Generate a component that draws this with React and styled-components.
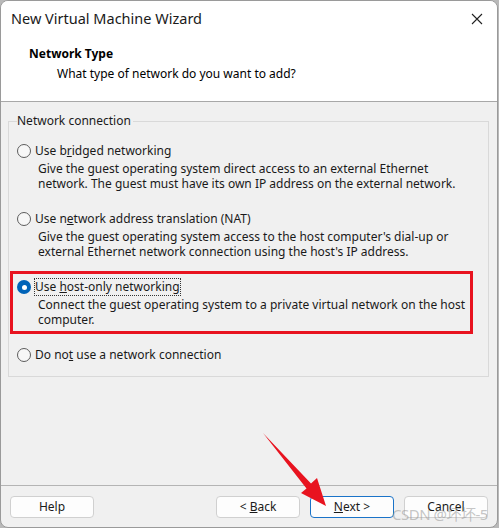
import React from "react";
import styled, { createGlobalStyle, css } from "styled-components";

const Global = createGlobalStyle`
  html, body { margin: 0; padding: 0; }
  body {
    background: #b9b9b9;
    font-family: "Noto Sans", "Liberation Sans", sans-serif;
    font-size: 12px;
    color: #000;
    width: 499px;
    height: 528px;
    overflow: hidden;
  }
`;

const Stage = styled.div`
  position: relative;
  width: 499px;
  height: 528px;
`;

const Window = styled.div`
  width: 498px;
  height: 528px;
  box-sizing: border-box;
  border: 1px solid #9a9a9a;
  border-radius: 8px;
  overflow: hidden;
  background: #f0f0f0;
  display: flex;
  flex-direction: column;
`;

const TitleBar = styled.div`
  height: 36px;
  background: #fff;
  display: flex;
  align-items: center;
  justify-content: space-between;
  padding: 0 13px 0 10px;
  flex-shrink: 0;
`;

const Title = styled.span`
  font-size: 14.5px;
  color: #1a1a1a;
  margin-top: -2px;
`;

const CloseBtn = styled.span`
  display: flex;
  width: 14px;
  height: 14px;
  margin-top: -1px;
`;

const Header = styled.div`
  background: #fff;
  height: 65px;
  border-bottom: 1px solid #a8a8a8;
  padding: 7px 0 0 28px;
  box-sizing: border-box;
  flex-shrink: 0;
`;

const HeaderTitle = styled.div`
  font-weight: 700;
  font-size: 12px;
  line-height: 20px;
`;

const HeaderSub = styled.div`
  padding-left: 28px;
  line-height: 20px;
`;

const Body = styled.div`
  flex: 1;
  padding: 11px 8px 0 7px;
`;

const Group = styled.fieldset`
  margin: 0;
  border: 1px solid #d9d9d9;
  padding: 12px 8px 11px 8px;
  width: 481px;
  box-sizing: border-box;
  display: flex;
  flex-direction: column;
  gap: 18px;
`;

const Legend = styled.legend`
  padding: 0 2px 0 0;
  margin-left: 0;
  line-height: 16px;
  color: #1a1a1a;
`;

const Option = styled.div`
  position: relative;
  display: flex;
  flex-direction: column;
  ${(p) =>
    p.$highlight &&
    css`
      &::after {
        content: "";
        position: absolute;
        left: -7px;
        top: -6px;
        width: 463px;
        height: 63px;
        box-sizing: border-box;
        border: 3px solid #e8131f;
        pointer-events: none;
      }
    `}
`;

const Row = styled.div`
  display: flex;
  align-items: center;
  height: 20px;
  gap: 4px;
`;

const Radio = styled.span`
  width: 14px;
  height: 14px;
  border-radius: 50%;
  box-sizing: border-box;
  flex-shrink: 0;
  ${(p) =>
    p.$checked
      ? css`
          background: #0063b8;
          position: relative;
          &::after {
            content: "";
            position: absolute;
            left: 4.5px;
            top: 4.5px;
            width: 5px;
            height: 5px;
            border-radius: 50%;
            background: #fff;
          }
        `
      : css`
          background: #f7f7f7;
          border: 1px solid #5c5c5c;
        `}
`;

const Label = styled.span`
  color: #1a1a1a;
  line-height: 16px;
  ${(p) =>
    p.$focus &&
    css`
      outline: 1px dotted #333;
      outline-offset: 0px;
    `}
`;

const Desc = styled.div`
  padding-left: 21px;
  line-height: 15px;
  color: #1a1a1a;
`;

const Footer = styled.div`
  flex-shrink: 0;
  height: 42px;
  border-top: 1px solid #b4b4b4;
  display: flex;
  align-items: flex-start;
  padding: 10px 9px 0 9px;
  box-sizing: border-box;
`;

const Button = styled.button`
  font-family: inherit;
  font-size: 12px;
  height: 22px;
  width: 84px;
  padding: 0;
  background: #fdfdfd;
  color: #1a1a1a;
  border: 1px solid ${(p) => (p.$default ? "#1a73c8" : "#d0d0d0")};
  border-radius: 4px;
  margin-left: ${(p) => p.$ml || 0}px;
  line-height: 20px;
`;

const Spacer = styled.div`
  flex: 1;
`;

const U = styled.span`
  text-decoration: underline;
`;

const Watermark = styled.div`
  position: absolute;
  left: 392px;
  top: 503px;
  font-size: 15px;
  color: rgba(150, 150, 150, 0.55);
  font-family: "Noto Sans", "Noto Sans CJK SC", sans-serif;
  letter-spacing: -0.5px;
  pointer-events: none;
`;

const ArrowSvg = styled.svg`
  position: absolute;
  left: 0;
  top: 0;
  pointer-events: none;
`;

export default function App() {
  return (
    <Stage>
      <Global />
      <Window>
        <TitleBar>
          <Title>New Virtual Machine Wizard</Title>
          <CloseBtn>
            <svg width="14" height="14" viewBox="0 0 14 14">
              <path d="M2 2 L12 12 M12 2 L2 12" stroke="#222" strokeWidth="1.1" />
            </svg>
          </CloseBtn>
        </TitleBar>
        <Header>
          <HeaderTitle>Network Type</HeaderTitle>
          <HeaderSub>What type of network do you want to add?</HeaderSub>
        </Header>
        <Body>
          <Group>
            <Legend>Network connection</Legend>
            <Option>
              <Row>
                <Radio />
                <Label>
                  Use b<U>r</U>idged networking
                </Label>
              </Row>
              <Desc>
                Give the guest operating system direct access to an external Ethernet
                <br />
                network. The guest must have its own IP address on the external network.
              </Desc>
            </Option>
            <Option>
              <Row>
                <Radio />
                <Label>
                  Use n<U>e</U>twork address translation (NAT)
                </Label>
              </Row>
              <Desc>
                Give the guest operating system access to the host computer's dial-up or
                <br />
                external Ethernet network connection using the host's IP address.
              </Desc>
            </Option>
            <Option $highlight>
              <Row>
                <Radio $checked />
                <Label $focus>
                  Use <U>h</U>ost-only networking
                </Label>
              </Row>
              <Desc>
                Connect the guest operating system to a private virtual network on the host
                <br />
                computer.
              </Desc>
            </Option>
            <Option>
              <Row>
                <Radio />
                <Label>
                  Do no<U>t</U> use a network connection
                </Label>
              </Row>
            </Option>
          </Group>
        </Body>
        <Footer>
          <Button>Help</Button>
          <Spacer />
          <Button>
            &lt; <U>B</U>ack
          </Button>
          <Button $default $ml={10}>
            <U>N</U>ext &gt;
          </Button>
          <Button $ml={10}>Cancel</Button>
        </Footer>
      </Window>
      <Watermark>CSDN @坏坏-5</Watermark>
      <ArrowSvg width="499" height="528" viewBox="0 0 499 528">
        <polygon
          points="263,433 311,483.5 317,478 326,506 301,493 306.5,488.5"
          fill="#e8131f"
        />
      </ArrowSvg>
    </Stage>
  );
}
